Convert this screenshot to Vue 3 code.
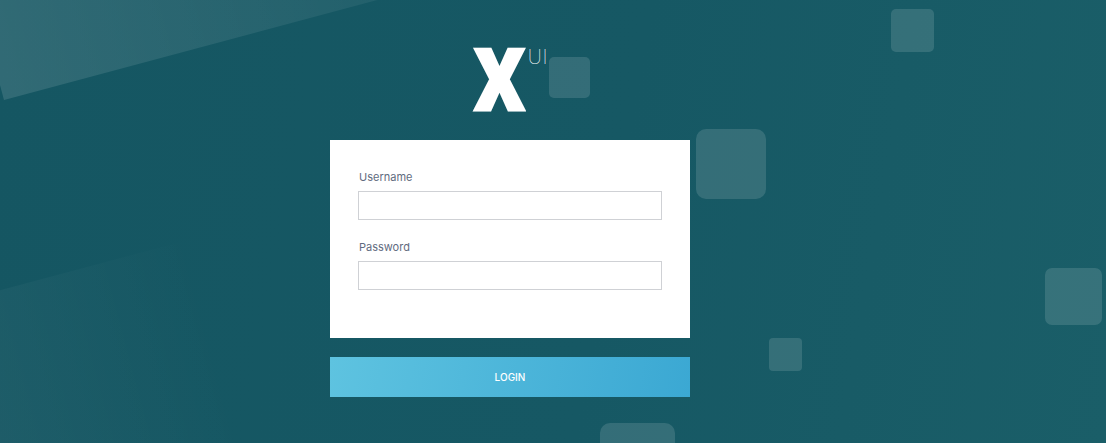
<script setup>
const squares = [
  { key: 'a', left: 891, top: 9, size: 43, radius: 5 },
  { key: 'b', left: 549, top: 57, size: 41, radius: 5 },
  { key: 'c', left: 696, top: 129, size: 70, radius: 10 },
  { key: 'd', left: 1045, top: 268, size: 57, radius: 7 },
  { key: 'e', left: 769, top: 338, size: 33, radius: 4 },
  { key: 'f', left: 600, top: 423, size: 75, radius: 10 }
]
</script>

<template>
  <main class="page">
    <div class="decor" aria-hidden="true">
      <div class="band band-top"></div>
      <div class="band band-bottom"></div>
      <div
        v-for="s in squares"
        :key="s.key"
        class="square"
        :style="{ left: s.left + 'px', top: s.top + 'px', width: s.size + 'px', height: s.size + 'px', borderRadius: s.radius + 'px' }"
      ></div>
    </div>

    <div class="logo">
      <span class="logo-x">X</span>
      <span class="logo-ui">UI</span>
    </div>

    <form class="form" @submit.prevent>
      <div class="card">
        <div class="field">
          <label for="username">Username</label>
          <input id="username" type="text" />
        </div>
        <div class="field">
          <label for="password">Password</label>
          <input id="password" type="password" />
        </div>
      </div>
      <button class="login" type="submit">LOGIN</button>
    </form>
  </main>
</template>

<style>
html, body { margin: 0; padding: 0; }
</style>

<style scoped>
.page {
  position: relative;
  box-sizing: border-box;
  width: 100%;
  height: 443px;
  overflow: hidden;
  display: flex;
  flex-direction: column;
  align-items: center;
  padding: 48px 86px 0 0;
  background: linear-gradient(100deg, #155662 0%, #165864 55%, #1a5e68 100%);
  font-family: Inter, "Liberation Sans", sans-serif;
}
.decor { position: absolute; inset: 0; }
.band {
  position: absolute;
  transform-origin: 0 100%;
  transform: rotate(-15deg);
}
.band-top {
  left: 4px;
  top: -200px;
  width: 420px;
  height: 300px;
  background: linear-gradient(90deg, rgba(255,255,255,0.12), rgba(255,255,255,0.05));
}
.band-bottom {
  left: -40px;
  top: 301px;
  width: 240px;
  height: 300px;
  transform-origin: 0 0;
  background: linear-gradient(90deg, rgba(255,255,255,0.04), rgba(255,255,255,0));
}
.square {
  position: absolute;
  background: rgba(255,255,255,0.13);
}
.logo {
  position: relative;
  display: flex;
  align-items: flex-start;
  height: 64px;
  margin-bottom: 28px;
  color: #fff;
}
.logo-x {
  display: block;
  width: 54px;
  margin-right: 2px;
  font-family: Roboto, sans-serif;
  font-weight: 900;
  font-size: 86px;
  line-height: 66px;
  text-align: center;
  -webkit-text-stroke: 3px #fff;
  transform: scaleX(0.9);
}
.logo-ui {
  font-family: Roboto, sans-serif;
  font-weight: 100;
  font-size: 21px;
  line-height: 18px;
  letter-spacing: 0.5px;
  color: #fff;
}
.form {
  position: relative;
  display: flex;
  flex-direction: column;
  width: 360px;
  gap: 19px;
}
.card {
  box-sizing: border-box;
  display: flex;
  flex-direction: column;
  gap: 18px;
  padding: 28px 28px 48px;
  background: #fff;
}
.field { display: flex; flex-direction: column; gap: 6px; }
label {
  box-sizing: border-box;
  height: 17px;
  padding: 1px 0 0 1px;
  font-size: 11px;
  line-height: 16px;
  color: #5f6b80;
}
input {
  box-sizing: border-box;
  width: 100%;
  height: 29px;
  margin: 0;
  border: 1px solid #cfd1d5;
  background: #fff;
  outline: none;
}
.login {
  height: 40px;
  border: 0;
  padding: 0;
  background: linear-gradient(100deg, #5ec3e0 0%, #3ba8d3 100%);
  color: #fff;
  font-family: Inter, sans-serif;
  font-size: 10px;
  font-weight: 500;
}
</style>
